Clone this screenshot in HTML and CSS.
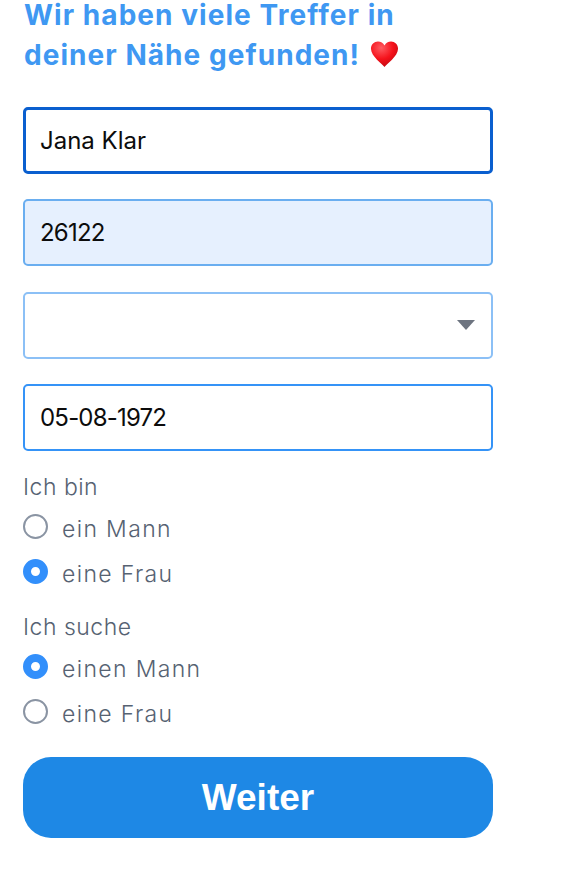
FILE: index.html
```html
<!DOCTYPE html>
<html lang="de">
<head>
<meta charset="utf-8">
<title>Wir haben viele Treffer</title>
<link rel="stylesheet" href="styles.css">
</head>
<body>
<form class="form">
  <h1 class="title">
    <span class="title-line">Wir haben viele Treffer in</span>
    <span class="title-line">deiner Nähe gefunden!
      <svg class="heart" viewBox="0 0 30 28" aria-hidden="true">
        <defs>
          <radialGradient id="hg" cx="38%" cy="25%" r="80%">
            <stop offset="0" stop-color="#ff5c62"/>
            <stop offset="0.55" stop-color="#f5121b"/>
            <stop offset="1" stop-color="#bd0810"/>
          </radialGradient>
        </defs>
        <path fill="url(#hg)" d="M15 27.500C13 24.500 1 16.500 1 8.600 1 4 4.400 1 8.200 1c3 0 5.400 1.600 6.800 4.200C16.400 2.600 18.800 1 21.800 1 25.600 1 29 4 29 8.600 29 16.500 17 24.500 15 27.500Z"/>
      </svg>
    </span>
  </h1>

  <div class="fields">
    <div class="field field-focus">Jana Klar</div>
    <div class="field field-filled field-num">26122</div>
    <div class="field field-select">
      <svg class="caret" viewBox="0 0 18 10" aria-hidden="true"><path d="M0 0h18L9 10Z"/></svg>
    </div>
    <div class="field field-date field-num">05-08-1972</div>
  </div>

  <fieldset class="group">
    <div class="group-label">Ich bin</div>
    <div class="option"><span class="radio"></span>ein Mann</div>
    <div class="option"><span class="radio radio-on"></span>eine Frau</div>
  </fieldset>

  <fieldset class="group group-second">
    <div class="group-label">Ich suche</div>
    <div class="option"><span class="radio radio-on"></span>einen Mann</div>
    <div class="option"><span class="radio"></span>eine Frau</div>
  </fieldset>

  <button class="submit" type="button">Weiter</button>
</form>
</body>
</html>
```
FILE: styles.css
```css
* { box-sizing: border-box; }
html, body { margin: 0; padding: 0; background: #fff; }
body {
  width: 567px;
  height: 893px;
  overflow: hidden;
  font-family: "Inter", "Liberation Sans", sans-serif;
}
.form {
  width: 470px;
  margin-left: 23px;
  display: flex;
  flex-direction: column;
}
.title {
  margin: 0 0 37px 1px;
  display: flex;
  flex-direction: column;
  gap: 10px;
  font-size: 28px;
  line-height: 30px;
  font-weight: 700;
  color: #3f98f2;
  white-space: nowrap;
  letter-spacing: 1.05px;
}
.title-line { display: block; }
.heart {
  width: 29px;
  height: 28px;
  margin-left: 2px;
  vertical-align: -3px;
}
.fields {
  display: flex;
  flex-direction: column;
  gap: 25.400px;
}
.field {
  height: 67px;
  padding: 0 15px;
  display: flex;
  align-items: center;
  border: 2px solid #3593f7;
  border-radius: 5px;
  font-size: 24px;
  color: #0c0c0c;
  background: #fff;
}
.field-num { letter-spacing: -0.8px; }
.field-focus { border: 3px solid #0a5fcf; padding: 0 14px; }
.field-filled { background: #e6f0fe; border-color: #6aaef0; }
.field-select { border-color: #8cc0f6; justify-content: flex-end; padding-right: 16px; }
.caret { width: 18px; height: 10px; fill: #6d7480; }
.group {
  margin: 21px 0 0;
  padding: 0;
  border: 0;
  display: flex;
  flex-direction: column;
  font-size: 23px;
  font-weight: 300;
  color: #566272;
}
.group-second { margin-top: 15px; }
.group-label { line-height: 30px; margin-bottom: 4px; letter-spacing: 0.5px; }
.option {
  display: flex;
  align-items: center;
  gap: 14px;
  height: 45.500px;
  line-height: 30px;
  letter-spacing: 1.35px;
}
.radio {
  width: 25px;
  height: 25px;
  flex: none;
  margin-top: -5px;
  border: 2px solid #8a94a3;
  border-radius: 50%;
  background: #fff;
}
.radio-on {
  border: 8px solid #328ffb;
}
.submit {
  margin-top: 20px;
  height: 81px;
  border: 0;
  border-radius: 28px;
  background: #1e88e5;
  color: #fff;
  font-family: "Liberation Sans", Arial, sans-serif;
  font-size: 37px;
  font-weight: 700;
}
```
